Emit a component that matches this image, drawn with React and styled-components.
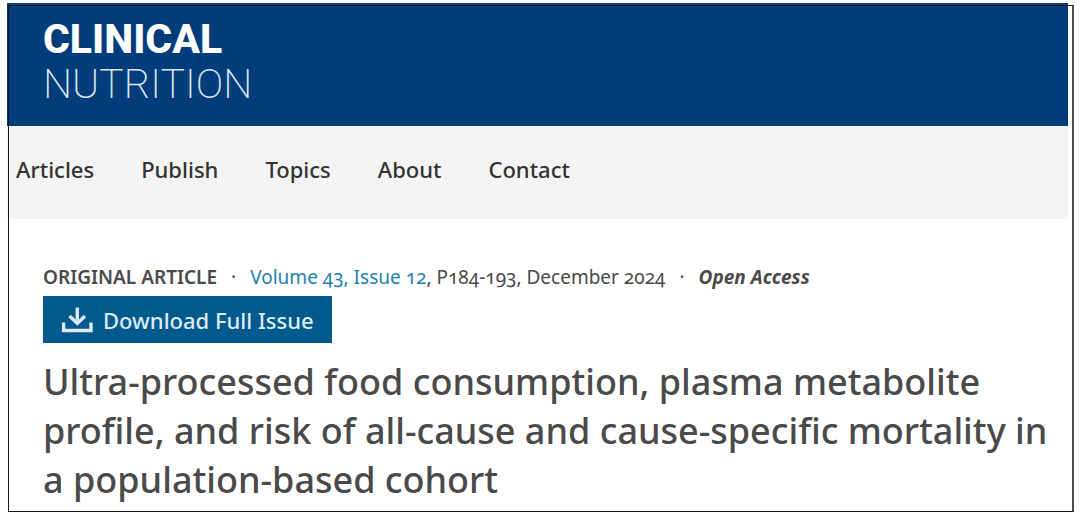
import React from "react";
import styled, { createGlobalStyle } from "styled-components";

const links = ["Articles", "Publish", "Topics", "About", "Contact"];

const GlobalStyle = createGlobalStyle`
  * {
    box-sizing: border-box;
  }

  body {
    margin: 0;
    background: #ffffff;
    color: #4a4a4a;
    font-family: "Noto Sans", "Open Sans", sans-serif;
    font-variant-numeric: oldstyle-nums;
  }
`;

const Page = styled.div`
  position: relative;
  padding: 3px 12px 3px 7px;
`;

const Frame = styled.div`
  position: absolute;
  inset: 5px 6px 4px 8px;
  border: 1px solid #15151c;
  border-right: 2px solid #4b4b52;
  pointer-events: none;
`;

const Header = styled.header`
  height: 123px;
  padding: 14px 36px;
  background: #003d7a;
`;

const Logo = styled.a`
  display: inline-flex;
  flex-direction: column;
  font-family: Roboto, sans-serif;
  font-size: 41px;
  font-weight: 800;
  line-height: 45px;
  color: #ffffff;
  text-decoration: none;
`;

const LogoLight = styled.span`
  font-weight: 200;
  color: #dbe6f1;
`;

const Nav = styled.nav`
  display: flex;
  gap: 47px;
  height: 93px;
  padding: 27px 9px;
  background: #f4f4f4;
`;

const NavLink = styled.a`
  font-size: 22px;
  font-weight: 500;
  line-height: 32px;
  color: #333333;
  text-decoration: none;
`;

const Article = styled.main`
  padding: 44px 0 9px 36px;
`;

const Meta = styled.div`
  display: flex;
  gap: 14px;
  font-size: 19px;
  line-height: 28px;
  white-space: nowrap;
`;

const Kind = styled.strong`
  font-weight: 600;
`;

const IssueLink = styled.a`
  color: #1f7fb0;
  text-decoration: none;
`;

const Access = styled.em`
  font-weight: 700;
`;

const DownloadButton = styled.button`
  display: flex;
  align-items: center;
  gap: 10px;
  height: 47px;
  margin: 5px 0 14px;
  padding: 0 18px;
  border: none;
  background: #005a8e;
  color: #dceaf3;
  font-family: inherit;
  font-size: 22px;
  font-weight: 500;
  line-height: 28px;
  cursor: pointer;
`;

const Title = styled.h1`
  margin: 0;
  font-size: 36px;
  font-weight: 500;
  line-height: 49px;
`;

const DownloadIcon = () => (
  <svg width="32" height="28" viewBox="0 0 32 28" fill="none" stroke="currentColor" strokeWidth="3.4" aria-hidden="true">
    <path d="M2.6 16.5V24.5H30V16.5" />
    <path d="M16.300 1.5V17" />
    <path d="M8.500 10L16.300 17.5L24 10" />
  </svg>
);

const App = () => {
  return (
    <Page>
      <GlobalStyle />
      <Header>
        <Logo href="#">
          <span>CLINICAL</span>
          <LogoLight>NUTRITION</LogoLight>
        </Logo>
      </Header>
      <Nav>
        {links.map((item) => (
          <NavLink key={item} href="#">
            {item}
          </NavLink>
        ))}
      </Nav>
      <Article>
        <Meta>
          <Kind>ORIGINAL ARTICLE</Kind>
          <span>·</span>
          <span>
            <IssueLink href="#">Volume 43, Issue 12</IssueLink>, P184-193, December 2024
          </span>
          <span>·</span>
          <Access>Open Access</Access>
        </Meta>
        <DownloadButton type="button">
          <DownloadIcon />
          Download Full Issue
        </DownloadButton>
        <Title>
          Ultra-processed food consumption, plasma metabolite profile, and risk of all-cause and cause-specific
          mortality in a population-based cohort
        </Title>
      </Article>
      <Frame />
    </Page>
  );
};

export default App;
